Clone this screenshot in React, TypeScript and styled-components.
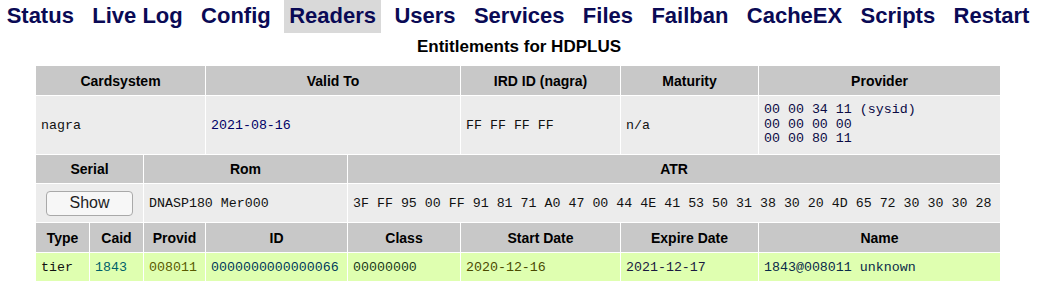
import React from "react";
import styled, { createGlobalStyle } from "styled-components";

const GlobalStyle = createGlobalStyle`
  html, body { margin: 0; padding: 0; background: #ffffff; }
  body { font-family: "Liberation Sans", Arial, sans-serif; }
`;

const Page = styled.div`
  display: flex;
  flex-direction: column;
  align-items: center;
  padding-right: 2px;
`;

const Menu = styled.nav`
  display: flex;
  justify-content: center;
  gap: 8.4px;
  height: 33px;
`;

const MenuItem = styled.a<{ $active?: boolean }>`
  display: block;
  padding: 0 5px;
  height: 33px;
  line-height: 32px;
  font-size: 22px;
  font-weight: bold;
  color: #0a0a55;
  text-decoration: none;
  white-space: nowrap;
  background: ${(p) => (p.$active ? "#d9d9d9" : "transparent")};
`;

const Title = styled.div`
  margin-top: 4px;
  height: 20px;
  line-height: 20px;
  font-size: 17px;
  font-weight: bold;
  color: #000;
  padding-left: 2px;
`;

const Grid = styled.div`
  margin-top: 9px;
  display: grid;
  grid-template-columns: 53px 53px 61px 141px 112px 159px 137px 241px;
  grid-template-rows: 29px 58px 28px 38px 29px 28px;
  gap: 1px;
  background: #ffffff;
`;

type Tone = "head" | "data" | "valid";

const Cell = styled.div<{ $span?: number; $tone: Tone; $color?: string }>`
  grid-column: span ${(p) => p.$span ?? 1};
  display: flex;
  align-items: center;
  justify-content: ${(p) => (p.$tone === "head" ? "center" : "flex-start")};
  padding: 0 5px;
  box-sizing: border-box;
  background: ${(p) =>
    p.$tone === "head" ? "#c8c8c8" : p.$tone === "valid" ? "#dfffb0" : "#ececec"};
  font-family: ${(p) =>
    p.$tone === "head"
      ? `"Liberation Sans", Arial, sans-serif`
      : `"Liberation Mono", "Courier New", monospace`};
  font-size: ${(p) => (p.$tone === "head" ? "14px" : "13.3px")};
  font-weight: ${(p) => (p.$tone === "head" ? "bold" : "normal")};
  color: ${(p) => p.$color ?? "#000"};
  white-space: pre;
  overflow: hidden;
`;

const ButtonCell = styled(Cell)`
  justify-content: center;
`;

const Lines = styled.div`
  display: flex;
  flex-direction: column;
  line-height: 14.7px;
`;

const ShowButton = styled.button`
  width: 87px;
  height: 25px;
  padding: 0;
  border: 1px solid #a9a9a9;
  border-radius: 4px;
  background: #f7f7f7;
  color: #222;
  font-family: "Liberation Sans", Arial, sans-serif;
  font-size: 16px;
`;

const menu = [
  "Status",
  "Live Log",
  "Config",
  "Readers",
  "Users",
  "Services",
  "Files",
  "Failban",
  "CacheEX",
  "Scripts",
  "Restart",
];

export default function App() {
  return (
    <>
      <GlobalStyle />
      <Page>
        <Menu>
          {menu.map((m) => (
            <MenuItem key={m} href="#" $active={m === "Readers"}>
              {m}
            </MenuItem>
          ))}
        </Menu>
        <Title>Entitlements for HDPLUS</Title>
        <Grid>
          <Cell $tone="head" $span={3}>Cardsystem</Cell>
          <Cell $tone="head" $span={2}>Valid To</Cell>
          <Cell $tone="head">IRD ID (nagra)</Cell>
          <Cell $tone="head">Maturity</Cell>
          <Cell $tone="head">Provider</Cell>

          <Cell $tone="data" $span={3} $color="#111">nagra</Cell>
          <Cell $tone="data" $span={2} $color="#000066">2021-08-16</Cell>
          <Cell $tone="data" $color="#111">FF FF FF FF</Cell>
          <Cell $tone="data" $color="#111">n/a</Cell>
          <Cell $tone="data" $color="#0a0a44">
            <Lines>
              <span>00 00 34 11 (sysid)</span>
              <span>00 00 00 00</span>
              <span>00 00 80 11</span>
            </Lines>
          </Cell>

          <Cell $tone="head" $span={2}>Serial</Cell>
          <Cell $tone="head" $span={2}>Rom</Cell>
          <Cell $tone="head" $span={4}>ATR</Cell>

          <ButtonCell $tone="data" $span={2}>
            <ShowButton type="button">Show</ShowButton>
          </ButtonCell>
          <Cell $tone="data" $span={2} $color="#111">DNASP180 Mer000</Cell>
          <Cell $tone="data" $span={4} $color="#111">
            3F FF 95 00 FF 91 81 71 A0 47 00 44 4E 41 53 50 31 38 30 20 4D 65 72 30 30 30 28
          </Cell>

          <Cell $tone="head">Type</Cell>
          <Cell $tone="head">Caid</Cell>
          <Cell $tone="head">Provid</Cell>
          <Cell $tone="head">ID</Cell>
          <Cell $tone="head">Class</Cell>
          <Cell $tone="head">Start Date</Cell>
          <Cell $tone="head">Expire Date</Cell>
          <Cell $tone="head">Name</Cell>

          <Cell $tone="valid" $color="#111">tier</Cell>
          <Cell $tone="valid" $color="#005f6a">1843</Cell>
          <Cell $tone="valid" $color="#5a5a00">008011</Cell>
          <Cell $tone="valid" $color="#003a5a">0000000000000066</Cell>
          <Cell $tone="valid" $color="#1a3a1a">00000000</Cell>
          <Cell $tone="valid" $color="#4a4a00">2020-12-16</Cell>
          <Cell $tone="valid" $color="#1a1a40">2021-12-17</Cell>
          <Cell $tone="valid" $color="#0a2a4a">1843@008011 unknown</Cell>
        </Grid>
      </Page>
    </>
  );
}
